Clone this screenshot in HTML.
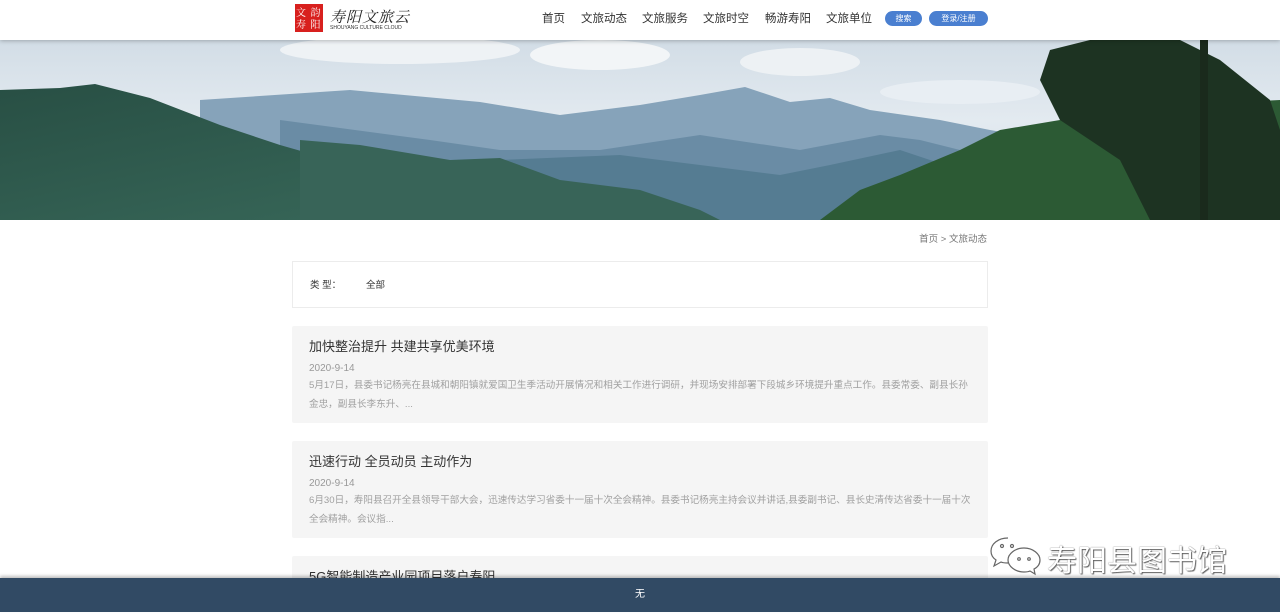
<!DOCTYPE html>
<html><head><meta charset="utf-8"><style>
*{margin:0;padding:0;box-sizing:border-box}
body{width:1280px;height:614px;overflow:hidden;background:#fff;font-family:"Liberation Sans","Noto Sans CJK SC",sans-serif;position:relative}
.hdr{position:absolute;top:0;left:0;width:1280px;height:40px;background:#fff;box-shadow:0 1px 4px rgba(0,0,0,.25);z-index:2}
.logo{position:absolute;left:295px;top:4px;width:28px;height:28px;background:#d8201e;color:#fff;font-size:10px;line-height:12px;padding:2px 1px;font-family:"Noto Serif CJK SC",serif;letter-spacing:1px}
.lt{position:absolute;left:330px;top:6px;font-size:15px;color:#222;font-family:"Noto Serif CJK SC",serif;font-style:italic;letter-spacing:1px}
.ls{position:absolute;left:330px;top:25px;font-size:5px;color:#333}
.nav{position:absolute;top:10px;font-size:11.5px;color:#333}
.btn{position:absolute;top:11px;height:15px;border-radius:8px;background:#4a7fd0;color:#fff;font-size:8px;line-height:15px;text-align:center}
.bn{position:absolute;top:40px;left:0;width:1280px;height:180px}
.crumb{position:absolute;right:293px;top:231px;font-size:9.5px;color:#777}
.filter{position:absolute;left:292px;top:261px;width:696px;height:47px;border:1px solid #ececec}
.filter span{position:absolute;top:15px;font-size:9.5px;color:#333}
.card{position:absolute;left:292px;width:696px;background:#f5f5f5;border-radius:2px}
.card h3{position:absolute;left:17px;top:10px;font-size:13px;font-weight:normal;color:#333}
.card .d{position:absolute;left:17px;top:37px;font-size:10px;color:#999}
.card p{position:absolute;left:17px;top:50px;width:665px;font-size:9.6px;line-height:19px;color:#a0a0a0}
.foot{position:absolute;left:0;top:578px;width:1280px;height:34px;background:#314a64;color:#fff;font-size:10px;text-align:center;line-height:34px;box-shadow:0 -2px 3px rgba(0,0,0,.25)}
.wm{position:absolute;left:1047px;top:536px;font-size:30px;color:#fff;text-shadow:0 0 1px #444,1px 1px 1px #666;font-family:"Noto Sans CJK SC",sans-serif}
.wi{position:absolute;left:988px;top:534px}
</style></head><body>
<div class="hdr">
<div class="logo">文 韵<br>寿 阳</div>
<div class="lt">寿阳文旅云</div>
<div class="ls">SHOUYANG CULTURE CLOUD</div>
<div class="nav" style="left:542px">首页</div>
<div class="nav" style="left:581px">文旅动态</div>
<div class="nav" style="left:642px">文旅服务</div>
<div class="nav" style="left:703px">文旅时空</div>
<div class="nav" style="left:765px">畅游寿阳</div>
<div class="nav" style="left:826px">文旅单位</div>
<div class="btn" style="left:885px;width:37px">搜索</div>
<div class="btn" style="left:929px;width:59px">登录/注册</div>
</div>
<svg class="bn" viewBox="0 0 1280 180" preserveAspectRatio="none">
<defs>
<linearGradient id="sky" x1="0" y1="0" x2="0" y2="1"><stop offset="0" stop-color="#d2dde6"/><stop offset=".45" stop-color="#e3eaf0"/><stop offset="1" stop-color="#cddbe6"/></linearGradient>
<linearGradient id="lm" x1="0" y1="0" x2="1" y2="1"><stop offset="0" stop-color="#284f44"/><stop offset="1" stop-color="#3a6b5c"/></linearGradient>
</defs>
<rect width="1280" height="180" fill="url(#sky)"/>
<ellipse cx="400" cy="10" rx="120" ry="14" fill="#eef2f5"/>
<ellipse cx="600" cy="15" rx="70" ry="15" fill="#f2f5f7"/>
<ellipse cx="800" cy="22" rx="60" ry="14" fill="#edf1f4"/>
<ellipse cx="960" cy="52" rx="80" ry="12" fill="#e8eef3"/>
<polygon points="200,60 350,50 480,62 560,75 640,65 700,55 745,47 790,62 830,58 870,70 940,80 990,90 1050,100 1050,180 200,180" fill="#86a3ba"/>
<polygon points="280,80 430,100 500,110 600,110 700,95 800,110 880,95 920,100 960,110 960,180 280,180" fill="#6a8ca5"/>
<polygon points="500,120 620,115 700,125 780,135 830,125 900,110 960,130 960,180 500,180" fill="#557c92"/>
<polygon points="0,50 60,48 95,44 150,58 220,85 280,105 350,125 420,140 480,150 560,165 620,180 0,180" fill="url(#lm)"/>
<polygon points="300,100 360,105 450,120 500,118 560,140 640,150 700,170 720,180 300,180" fill="#386458"/>
<polygon points="820,180 860,150 900,135 960,110 1000,90 1060,80 1100,70 1280,60 1280,180" fill="#2c5a34"/>
<polygon points="1050,10 1090,0 1180,0 1220,20 1270,60 1280,90 1280,180 1150,180 1120,120 1060,80 1040,40" fill="#1d3322"/>
<rect x="1200" y="0" width="8" height="180" fill="#1a2a1c"/>
</svg>
<div class="crumb">首页 &gt; 文旅动态</div>
<div class="filter"><span style="left:17px">类 型：</span><span style="left:73px">全部</span></div>
<div class="card" style="top:326px;height:97px"><h3>加快整治提升 共建共享优美环境</h3><div class="d">2020-9-14</div><p>5月17日，县委书记杨亮在县城和朝阳镇就爱国卫生季活动开展情况和相关工作进行调研，并现场安排部署下段城乡环境提升重点工作。县委常委、副县长孙金忠，副县长李东升、...</p></div>
<div class="card" style="top:441px;height:97px"><h3>迅速行动 全员动员 主动作为</h3><div class="d">2020-9-14</div><p>6月30日，寿阳县召开全县领导干部大会，迅速传达学习省委十一届十次全会精神。县委书记杨亮主持会议并讲话,县委副书记、县长史清传达省委十一届十次全会精神。会议指...</p></div>
<div class="card" style="top:556px;height:40px"><h3>5G智能制造产业园项目落户寿阳</h3></div>
<svg class="wi" width="56" height="44" viewBox="0 0 56 44"><g fill="none" stroke="#666" stroke-width="1.2"><path d="M20 4c-10 0-17 6-17 13 0 4 2 7 5 9l-2 6 7-4c2 1 4 1 7 1"/><path d="M36 14c-9 0-16 6-16 12s7 12 16 12c2 0 4 0 6-1l5 3-1-5c4-2 6-5 6-9 0-6-7-12-16-12z" fill="#fff"/><circle cx="14" cy="12" r="1.5"/><circle cx="24" cy="12" r="1.5"/><circle cx="31" cy="25" r="1.3"/><circle cx="41" cy="25" r="1.3"/></g></svg>
<div class="wm">寿阳县图书馆</div>
<div class="foot">无</div>
</body></html>
